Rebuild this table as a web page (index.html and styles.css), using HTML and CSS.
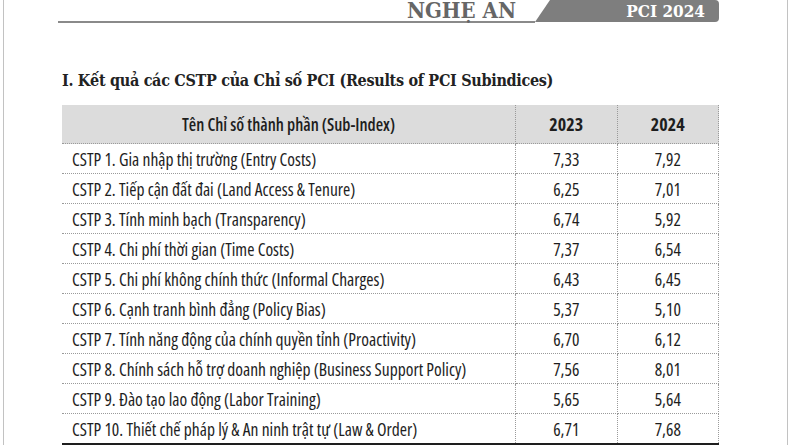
FILE: index.html
```html
<!DOCTYPE html>
<html lang="vi">
<head>
<meta charset="utf-8">
<title>PCI 2024 - Nghệ An</title>
<link rel="stylesheet" href="styles.css">
</head>
<body>
<div class="page">
  <header class="masthead">
    <div class="rule-title"><span class="province">NGHỆ AN</span></div>
    <div class="badge"><span>PCI 2024</span></div>
  </header>
  <h2 class="section-title">I. Kết quả các CSTP của Chỉ số PCI (Results of PCI Subindices)</h2>
  <table class="pci">
    <thead>
      <tr><th class="name">Tên Chỉ số thành phần (Sub-Index)</th><th>2023</th><th>2024</th></tr>
    </thead>
    <tbody>
      <tr><td class="name">CSTP 1. Gia nhập thị trường (Entry Costs)</td><td>7,33</td><td>7,92</td></tr>
      <tr><td class="name">CSTP 2. Tiếp cận đất đai (Land Access &amp; Tenure)</td><td>6,25</td><td>7,01</td></tr>
      <tr><td class="name">CSTP 3. Tính minh bạch (Transparency)</td><td>6,74</td><td>5,92</td></tr>
      <tr><td class="name">CSTP 4. Chi phí thời gian (Time Costs)</td><td>7,37</td><td>6,54</td></tr>
      <tr><td class="name">CSTP 5. Chi phí không chính thức (Informal Charges)</td><td>6,43</td><td>6,45</td></tr>
      <tr><td class="name">CSTP 6. Cạnh tranh bình đẳng (Policy Bias)</td><td>5,37</td><td>5,10</td></tr>
      <tr><td class="name">CSTP 7. Tính năng động của chính quyền tỉnh (Proactivity)</td><td>6,70</td><td>6,12</td></tr>
      <tr><td class="name">CSTP 8. Chính sách hỗ trợ doanh nghiệp (Business Support Policy)</td><td>7,56</td><td>8,01</td></tr>
      <tr><td class="name">CSTP 9. Đào tạo lao động (Labor Training)</td><td>5,65</td><td>5,64</td></tr>
      <tr><td class="name">CSTP 10. Thiết chế pháp lý &amp; An ninh trật tự (Law &amp; Order)</td><td>6,71</td><td>7,68</td></tr>
    </tbody>
  </table>
</div>
</body>
</html>
```

FILE: styles.css
```css
html, body {
  margin: 0;
  padding: 0;
  background: #ffffff;
}

.page {
  margin-left: 3px;
  width: 783px;
  height: 445px;
  border-left: 1px solid #c2c2c2;
  border-right: 1px solid #c2c2c2;
  overflow: hidden;
  display: flex;
  flex-direction: column;
  align-items: flex-start;
}

.masthead {
  display: flex;
  align-items: flex-start;
  margin-left: 54px;
  width: 661px;
  height: 23px;
}

.rule-title {
  flex: 1;
  height: 21px;
  border-bottom: 2px solid #8a8a8a;
  text-align: right;
  padding-right: 19px;
  overflow: visible;
}

.province {
  display: inline-block;
  font-family: "DejaVu Serif Condensed", "DejaVu Serif", serif;
  font-stretch: condensed;
  font-weight: 700;
  font-size: 22px;
  line-height: 20px;
  color: #666666;
}

.badge {
  width: 184px;
  height: 22px;
  background: #7e7e7e;
  border-radius: 0 4px 4px 0;
  clip-path: polygon(15px 0, 100% 0, 100% 100%, 0 100%);
  display: flex;
  align-items: center;
  justify-content: flex-end;
  padding-right: 14px;
  box-sizing: border-box;
}

.badge span {
  font-family: "DejaVu Serif Condensed", "DejaVu Serif", serif;
  font-stretch: condensed;
  font-weight: 700;
  font-size: 17px;
  color: #ffffff;
  line-height: 22px;
}

.section-title {
  margin: 48px 0 0 58px;
  font-family: "DejaVu Serif Condensed", "DejaVu Serif", serif;
  font-stretch: condensed;
  font-weight: 700;
  font-size: 16px;
  letter-spacing: -0.3px;
  line-height: 20px;
  color: #222222;
}

.pci {
  margin: 14px 0 0 58px;
  width: 657px;
  border-collapse: collapse;
  font-family: "Open Sans", "DejaVu Sans Condensed", sans-serif;
  font-stretch: 79%;
  color: #1e1e1e;
  border-bottom: 3px solid #1e1e1e;
}

.pci th,
.pci td {
  padding: 0;
  text-align: center;
  white-space: nowrap;
  border-left: 1px dotted #9a9a9a;
  border-right: 1px dotted #9a9a9a;
  border-bottom: 1px dotted #9a9a9a;
}

.pci th:first-child,
.pci td:first-child {
  border-left: none;
}

.pci th {
  background: #dcdcdc;
  height: 38px;
  font-size: 18px;
  font-weight: 700;
}

.pci th.name {
  font-weight: 600;
  font-size: 17px;
}

.pci th.name {
  width: 453px;
}

.pci td.name {
  width: 443px;
}

.pci td {
  height: 29px;
  font-size: 17.5px;
  font-weight: 500;
}

.pci td.name {
  text-align: left;
  padding-left: 10px;
}

.pci tbody tr:last-child td {
  border-bottom: none;
}
```
